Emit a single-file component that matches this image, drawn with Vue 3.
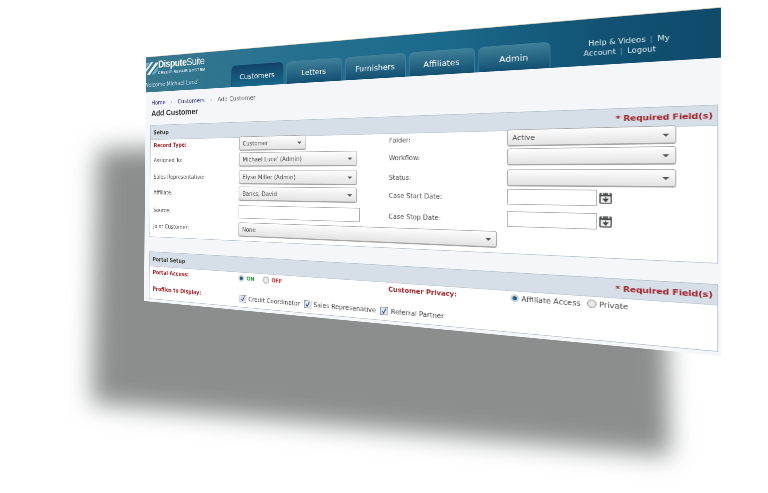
<template>
  <div class="stage">
    <!-- cast shadow behind the tilted page -->
    <svg class="cast" width="768" height="493" viewBox="0 0 768 493">
      <defs>
        <filter id="castBlur" x="-10%" y="-10%" width="120%" height="120%">
          <feGaussianBlur stdDeviation="12" />
        </filter>
      </defs>
      <polygon points="98,150 660,130 670,456 92,403" fill="#8a8e8d" filter="url(#castBlur)" />
    </svg>

    <div class="page" :style="{ transform: pageMatrix }">
      <header class="top">
        <div class="brand">
          <svg class="mark" width="26" height="26" viewBox="0 0 26 26">
            <path d="M0 14 L12 1 H17 L0 20 Z M2 25 L22 3 H26 V6 L9 25 Z" fill="#e6f2f8" />
            <path d="M0 2 H9 L0 11 Z M13 25 L26 11 V18 L19 25 Z" fill="#6db0d8" />
          </svg>
          <div class="name"><b>Dispute</b>Suite</div>
          <div class="sub">CREDIT REPAIR SYSTEM</div>
          <div class="welcome">Welcome Michael Luce'</div>
        </div>
        <nav class="tabs">
          <div v-for="(tab, i) in tabs" :key="tab" class="tab" :class="{ on: i === 0 }">{{ tab }}</div>
        </nav>
        <div class="links">
          <div class="l1">Help &amp; Videos <i>|</i> My</div>
          <div>Account <i>|</i> Logout</div>
        </div>
      </header>

      <div class="crumbs">
        <a>Home</a><span class="sep">›</span><a>Customers</a><span class="sep">›</span><span>Add Customer</span>
      </div>
      <h1>Add Customer</h1>

      <section class="box setup">
        <div class="bar"><span>Setup</span><em>* Required Field(s)</em></div>
        <div class="form">
          <label class="req">Record Type:</label>
          <div class="cell"><div class="sel short">Customer</div></div>
          <label class="big">Folder:</label>
          <div class="cell"><div class="sel">Active</div></div>

          <label>Assigned To:</label>
          <div class="cell"><div class="sel">Michael Luce' (Admin)</div></div>
          <label class="big">Workflow:</label>
          <div class="cell"><div class="sel"></div></div>

          <label>Sales Representative:</label>
          <div class="cell"><div class="sel">Elyse Miller (Admin)</div></div>
          <label class="big">Status:</label>
          <div class="cell"><div class="sel"></div></div>

          <label>Affiliate:</label>
          <div class="cell"><div class="sel">Banks, David</div></div>
          <label class="big">Case Start Date:</label>
          <div class="cell">
            <div class="inp date"></div>
            <svg class="cal" width="16" height="17" viewBox="0 0 16 17">
              <rect x="1" y="2" width="14" height="14" rx="1" fill="#ecece8" stroke="#4b4f4f" stroke-width="1.6" />
              <path d="M1 4.5 H15" stroke="#4b4f4f" stroke-width="3.4" />
              <path d="M4 1 V4 M12 1 V4" stroke="#f2f2ee" stroke-width="1.6" />
              <path d="M8 7 V10.5 M5.2 10 H10.8 L8 13.6 Z" stroke="#3f4343" fill="#3f4343" stroke-width="1.2" />
            </svg>
          </div>

          <label>Source:</label>
          <div class="cell"><div class="inp"></div></div>
          <label class="big">Case Stop Date:</label>
          <div class="cell">
            <div class="inp date"></div>
            <svg class="cal" width="16" height="17" viewBox="0 0 16 17">
              <rect x="1" y="2" width="14" height="14" rx="1" fill="#ecece8" stroke="#4b4f4f" stroke-width="1.6" />
              <path d="M1 4.5 H15" stroke="#4b4f4f" stroke-width="3.4" />
              <path d="M4 1 V4 M12 1 V4" stroke="#f2f2ee" stroke-width="1.6" />
              <path d="M8 7 V10.5 M5.2 10 H10.8 L8 13.6 Z" stroke="#3f4343" fill="#3f4343" stroke-width="1.2" />
            </svg>
          </div>
        </div>
        <div class="joint">
          <label>Joint Customer:</label>
          <div class="sel wide">None</div>
        </div>
      </section>

      <section class="box portal">
        <div class="bar"><span>Portal Setup</span><em>* Required Field(s)</em></div>
        <div class="form2">
          <label class="req">Portal Access:</label>
          <div class="opts">
            <span class="radio on"></span><span class="green">ON</span>
            <span class="radio off-gap"></span><span class="red">OFF</span>
          </div>
          <label class="req big">Customer Privacy:</label>
          <div class="opts priv">
            <span class="radio on"></span><span>Affiliate Access</span>
            <span class="radio"></span><span>Private</span>
          </div>
          <label class="req">Profiles to Display:</label>
          <div class="checks">
            <template v-for="p in profiles" :key="p">
              <svg class="chk" width="13" height="13" viewBox="0 0 13 13">
                <rect x="0.5" y="0.5" width="12" height="12" fill="#dfe3ea" stroke="#8d9197" />
                <path d="M3.5 7 L5.5 10 L9.5 2.5" fill="none" stroke="#24408e" stroke-width="1.4" />
              </svg>
              <span class="chk-txt">{{ p }}</span>
            </template>
          </div>
        </div>
      </section>
    </div>
  </div>
</template>

<script setup>
import { computed } from 'vue'

const tabs = ['Customers', 'Letters', 'Furnishers', 'Affiliates', 'Admin']
const profiles = ['Credit Coordinator', 'Sales Represenative', 'Referral Partner']

// flat size of the page and the four corners it lands on
const W = 900
const H = 460
const corners = [[146, 57], [721, 7], [721, 356], [144, 301]]

const pageMatrix = computed(() => {
  const [[x0, y0], [x1, y1], [x2, y2], [x3, y3]] = corners
  const dx1 = x1 - x2, dx2 = x3 - x2, sx = x0 - x1 + x2 - x3
  const dy1 = y1 - y2, dy2 = y3 - y2, sy = y0 - y1 + y2 - y3
  const den = dx1 * dy2 - dx2 * dy1
  const g = (sx * dy2 - dx2 * sy) / den
  const h = (dx1 * sy - sx * dy1) / den
  const a = x1 - x0 + g * x1
  const b = x3 - x0 + h * x3
  const d = y1 - y0 + g * y1
  const e = y3 - y0 + h * y3
  return `matrix3d(${a / W},${d / W},0,${g / W},${b / H},${e / H},0,${h / H},0,0,1,0,${x0},${y0},0,1)`
})
</script>

<style>
html, body { margin: 0; background: #fff; }
</style>

<style scoped>
.stage {
  position: relative;
  width: 768px;
  height: 493px;
  overflow: hidden;
  background: #fff;
  font-family: "DejaVu Sans", sans-serif;
  color: #444;
}

.cast {
  position: absolute;
  left: 0;
  top: 0;
}

.page {
  position: absolute;
  left: 0;
  top: 0;
  width: 900px;
  height: 460px;
  transform-origin: 0 0;
  background: #f4f6fa;
  overflow: hidden;
  filter: blur(0.35px);
}

.top {
  display: flex;
  height: 67px;
  box-sizing: border-box;
  border-top: 1px solid #cfc9b4;
  background: linear-gradient(90deg, #39788e 0%, #2a7390 25%, #1b6a8c 60%, #115272 85%, #0f4a6b 100%);
}

.brand {
  position: relative;
  width: 180px;
  flex: none;
  color: #fff;
}

.mark {
  position: absolute;
  left: 0;
  top: 8px;
}

.name {
  position: absolute;
  left: 27px;
  top: 4px;
  font: 18px/22px "Liberation Sans", sans-serif;
  letter-spacing: -0.7px;
  white-space: nowrap;
}

.sub {
  position: absolute;
  left: 27px;
  top: 26px;
  font: bold 7.5px/9px "Liberation Sans", sans-serif;
  letter-spacing: 0.5px;
  color: #d6e6ee;
  white-space: nowrap;
}

.welcome {
  position: absolute;
  left: -3px;
  top: 46px;
  font-size: 10px;
  line-height: 13px;
  color: #cfe0e8;
  white-space: nowrap;
}

.tabs {
  display: flex;
  align-items: flex-end;
  gap: 5px;
}

.tab {
  width: 99px;
  height: 38px;
  box-sizing: border-box;
  padding-top: 12px;
  text-align: center;
  font-size: 12.5px;
  color: #fff;
  border: 1px solid #3f8099;
  border-bottom: 0;
  border-radius: 8px 8px 0 0;
  background: linear-gradient(#3f7f98, #124f72);
}

.tab.on {
  border-color: #124a6c;
  background: linear-gradient(#114468, #17688a);
}

.links {
  margin: 28px 0 0 43px;
  font-size: 10px;
  line-height: 14px;
  color: #dce9ef;
  white-space: nowrap;
}

.links .l1 {
  padding-left: 6px;
}

.links i {
  font-style: normal;
  color: #6f9fb3;
  margin: 0 2px;
}

.crumbs {
  display: flex;
  padding: 13px 0 0 13px;
  font-size: 10.5px;
  line-height: 14px;
  color: #666;
}

.crumbs a {
  color: #2a2a8c;
}

.crumbs .sep {
  width: 26px;
  text-align: center;
  color: #888;
}

h1 {
  margin: 4px 0 0 13px;
  font: bold 14.5px/18px "Liberation Sans", sans-serif;
  color: #333;
}

.box {
  margin: 0 3px 0 11px;
  border: 1px solid #b9c5cf;
  background: #fff;
  box-sizing: border-box;
}

.setup {
  margin-top: 13px;
  height: 210px;
}

.portal {
  margin-top: 27px;
  height: 89px;
}

.bar {
  display: flex;
  justify-content: space-between;
  align-items: center;
  height: 26px;
  padding: 0 5px 0 6px;
  background: #d6dfe7;
  border-bottom: 1px solid #c2ccd6;
  font-size: 10px;
  font-weight: bold;
  color: #444;
}

.bar em {
  font-style: normal;
  font-size: 11px;
  letter-spacing: -0.2px;
  color: #a3262e;
}

.form {
  display: grid;
  grid-template-columns: 177px 265px 176px 1fr;
  grid-template-rows: 28px 31px 29px 33px 30px;
  margin-top: -2px;
  padding-left: 7px;
  align-items: start;
}

.form label {
  align-self: start;
  line-height: 24px;
  margin-top: 1px;
}

label {
  font-size: 10px;
  color: #4c4c4c;
}

label.req {
  font-weight: bold;
  font-size: 9.7px;
  color: #a3262e;
}

label.req.big {
  font-size: 10.2px;
}

.cell {
  display: flex;
  align-items: flex-start;
  gap: 3px;
}

.sel {
  position: relative;
  box-sizing: border-box;
  width: 213px;
  height: 24px;
  padding: 0 6px;
  font-size: 10px;
  line-height: 23px;
  color: #4c4c4c;
  border: 1px solid #a8a8a8;
  border-radius: 3px;
  background: linear-gradient(#fdfdfd, #e3e3e3);
  box-shadow: 0 1px 1px #9a9a9a;
}

.sel::after {
  content: "";
  position: absolute;
  right: 7px;
  top: 10px;
  border: 4px solid transparent;
  border-top-color: #555;
  border-bottom: 0;
}

.sel.short {
  width: 125px;
}

.sel.wide {
  width: 427px;
}

.inp {
  box-sizing: border-box;
  width: 218px;
  height: 23px;
  background: #fff;
  border: 1px solid #a9a9a9;
}

.inp.date {
  width: 118px;
}

.cal {
  margin-top: 3px;
}

.joint {
  display: flex;
  padding-left: 7px;
}

.joint label {
  width: 177px;
  line-height: 24px;
  margin-top: 1px;
}

.form2 {
  display: grid;
  grid-template-columns: 177px 265px 176px 1fr;
  grid-template-rows: 31px 30px;
  padding: 4px 0 0 7px;
}

.form2 label {
  line-height: 14px;
}

.opts {
  display: flex;
  align-items: flex-start;
  gap: 4px;
  font-size: 10px;
  line-height: 13px;
}

.radio {
  flex: none;
  box-sizing: border-box;
  width: 12px;
  height: 12px;
  border: 1px solid #999;
  border-radius: 50%;
  background: radial-gradient(circle, #f4f4f4, #d2d2d2);
}

.radio.on {
  border: 3px solid #cfd6dc;
  background: #1c5f91;
}

.off-gap {
  margin-left: 12px;
}

.green {
  color: #2d9a45;
  font-weight: bold;
  font-size: 9px;
}

.red {
  color: #e0242b;
  font-weight: bold;
  font-size: 9px;
}

.priv {
  padding-left: 5px;
  gap: 0;
  font-size: 10.3px;
}

.priv span:nth-child(2) {
  margin: 0 8px 0 3px;
}

.priv span:nth-child(4) {
  margin-left: 3px;
}

.checks {
  display: flex;
  align-items: flex-start;
  font-size: 10.4px;
  line-height: 13px;
  grid-column: 2 / 5;
  padding: 4px 0 0 3px;
}

.chk {
  flex: none;
  margin-right: 4px;
}

.chk-txt {
  margin-right: 7px;
  white-space: nowrap;
}
</style>
